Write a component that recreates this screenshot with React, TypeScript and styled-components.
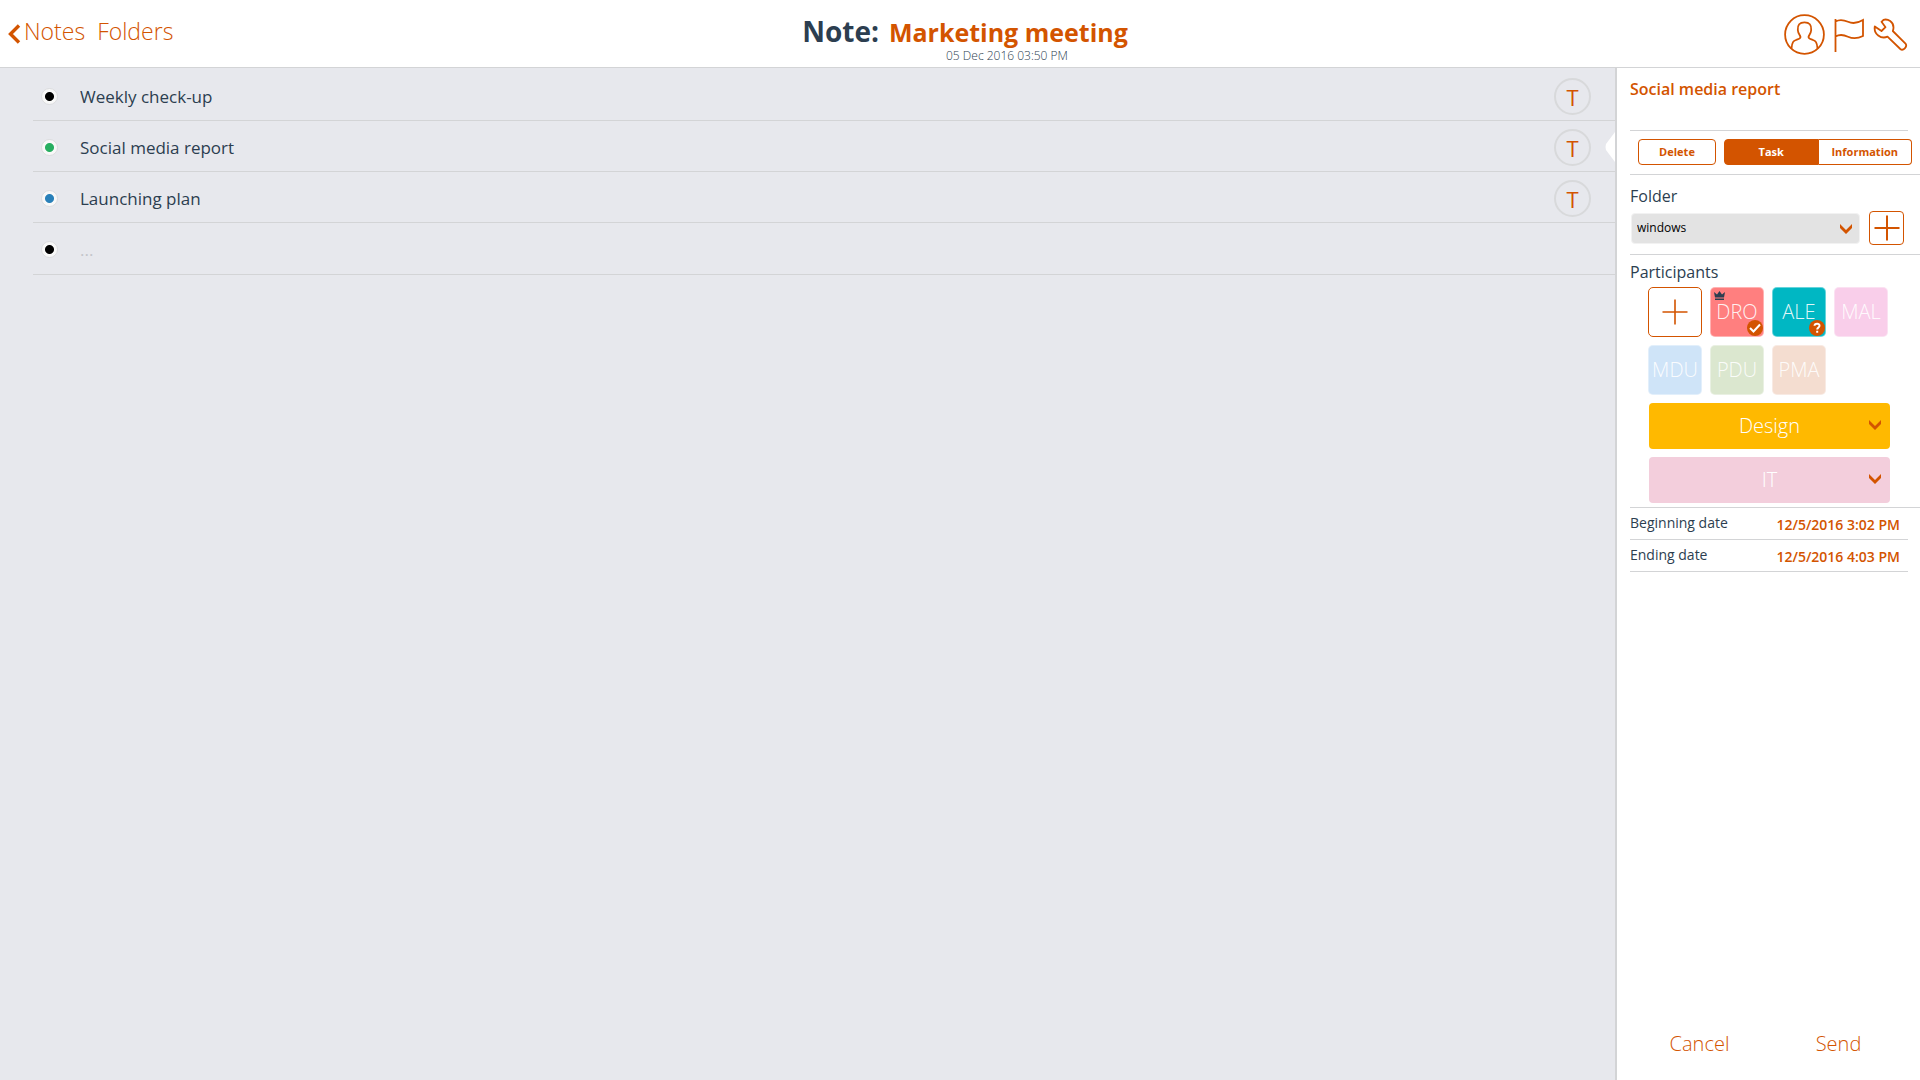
import React, { useState } from "react";
import styled, { createGlobalStyle } from "styled-components";

const accent = "#d35400";
const ink = "#2c3e50";
const rule = "#d3d4d6";

const GlobalStyle = createGlobalStyle`
  *, *::before, *::after { box-sizing: border-box; }
  body { margin: 0; background: #fff; color: ${ink}; font-family: "Open Sans", "Noto Sans", sans-serif; }
  button, input, select { font: inherit; color: inherit; }
  button { padding: 0; border: 0; background: none; cursor: pointer; }
  svg { display: block; }
`;

const Page = styled.div`
  display: flex;
  flex-direction: column;
  min-height: 100vh;
`;

const Header = styled.header`
  display: grid;
  grid-template-columns: 1fr auto 1fr;
  height: 68px;
  padding: 0 12px 0 8px;
  border-bottom: 1px solid ${rule};
`;

const Nav = styled.nav`
  display: flex;
  align-items: center;
  gap: 12px;
  padding-bottom: 6px;
`;

const NavLink = styled.a`
  display: flex;
  align-items: center;
  gap: 3px;
  color: ${accent};
  font-size: 23px;
  font-weight: 300;
  line-height: 32px;
  text-decoration: none;

  svg { margin-top: 6px; }
`;

const Heading = styled.div`
  display: flex;
  flex-direction: column;
  align-items: center;
  padding: 14px 0 0 14px;
`;

const Title = styled.h1`
  display: flex;
  align-items: baseline;
  gap: 10px;
  margin: 0;
  font-size: 28px;
  font-weight: 700;
  line-height: 34px;
`;

const TitleName = styled.span`
  color: ${accent};
  font-size: 25px;
`;

const Stamp = styled.time`
  padding-left: 84px;
  font-size: 12px;
  font-weight: 300;
  line-height: 14px;
  color: ${ink};
`;

const Tools = styled.div`
  display: flex;
  align-items: center;
  justify-content: flex-end;
  gap: 8px;
  padding-top: 2px;
`;

const IconButton = styled.button`
  display: flex;
  color: ${accent};
`;

const Body = styled.div`
  display: flex;
  flex: 1;
`;

const Main = styled.main`
  flex: 1;
  min-width: 0;
  background: #e7e8ed;
`;

const List = styled.ul`
  margin: 0;
  padding: 2px 0 0 33px;
  list-style: none;
`;

const Item = styled.li`
  position: relative;
  display: flex;
  align-items: center;
  height: 51px;
  padding: 2px 24px 0 8px;
  border-bottom: 1px solid ${rule};

  &:last-child { height: 52px; }
`;

const Bullet = styled.button<{ $color: string }>`
  width: 17px;
  height: 17px;
  margin-right: 22px;
  border: 1px solid #dddddf;
  border-radius: 50%;
  background: radial-gradient(circle, ${(p) => p.$color} 0 4px, #f8f8f8 5px);
`;

const ItemText = styled.input`
  flex: 1;
  min-width: 0;
  height: 40px;
  padding: 0;
  border: 0;
  outline: 0;
  background: none;
  font-size: 17px;

  &::placeholder { color: #c3c4c9; opacity: 1; }
`;

const TypeButton = styled.button`
  width: 37px;
  height: 37px;
  border: 2px solid #d8d9db;
  border-radius: 50%;
  color: ${accent};
  font-size: 22px;
  line-height: 34px;
`;

const Pointer = styled.svg`
  position: absolute;
  right: 0;
  top: 11px;
`;

const Side = styled.aside`
  display: flex;
  flex-direction: column;
  width: 305px;
  border-left: 2px solid ${rule};
`;

const Section = styled.section<{ $inset?: boolean }>`
  margin-left: 13px;
  margin-right: ${(p) => (p.$inset ? 12 : 0)}px;
  border-bottom: 1px solid ${rule};
`;

const TaskTitle = styled.h2`
  height: 62px;
  margin: 0;
  padding-top: 9px;
  color: ${accent};
  font-size: 16px;
  font-weight: 600;
  line-height: 24px;
`;

const Actions = styled.div`
  display: flex;
  gap: 8px;
  padding: 8px 8px 9px;
`;

const SmallButton = styled.button<{ $on?: boolean }>`
  height: 26px;
  flex: 1;
  padding-bottom: 2px;
  border: 1px solid ${accent};
  border-radius: 4px;
  background: ${(p) => (p.$on ? accent : "#fff")};
  color: ${(p) => (p.$on ? "#fff" : accent)};
  font-size: 11px;
  font-weight: 700;
`;

const DeleteBox = styled.div`
  display: flex;
  width: 78px;
`;

const Tabs = styled.div`
  display: flex;
  flex: 1;

  ${SmallButton}:first-child { border-radius: 4px 0 0 4px; }
  ${SmallButton}:last-child { border-radius: 0 4px 4px 0; border-left: 0; }
`;

const Label = styled.label`
  display: block;
  font-size: 16px;
  line-height: 24px;
`;

const SubHeading = styled.h3`
  margin: 0;
  padding-top: 5px;
  font-size: 16px;
  font-weight: 400;
  line-height: 24px;
`;

const FolderBox = styled.div`
  padding: 9px 16px 9px 0;
`;

const FolderRow = styled.div`
  display: flex;
  align-items: center;
  gap: 9px;
  padding: 3px 0 0 1px;
`;

const SelectWrap = styled.div`
  position: relative;
  flex: 1;

  svg { position: absolute; right: 8px; top: 11px; pointer-events: none; }
`;

const Select = styled.select`
  display: block;
  width: 100%;
  height: 31px;
  padding: 0 28px 2px 5px;
  border: 1px solid #f2f2f2;
  border-radius: 4px;
  background: #e3e3e3;
  color: #000;
  font-size: 12px;
  appearance: none;
`;

const AddFolder = styled.button`
  display: grid;
  place-items: center;
  width: 35px;
  height: 34px;
  border: 1px solid ${accent};
  border-radius: 4px;
  color: ${accent};
`;

const People = styled.div`
  display: grid;
  grid-template-columns: repeat(4, 54px);
  gap: 8px;
  padding: 3px 0 8px 18px;
`;

const Tile = styled.button<{ $bg: string }>`
  position: relative;
  display: grid;
  place-items: center;
  height: 50px;
  border: 1px solid ${(p) => (p.$bg === "#fff" ? accent : "rgba(255, 255, 255, 0.4)")};
  border-radius: 5px;
  background: ${(p) => p.$bg};
  color: rgba(255, 255, 255, 0.9);
  font-size: 20px;
  font-weight: 300;
  line-height: 24px;
`;

const Crown = styled.svg`
  position: absolute;
  left: 3px;
  top: 3px;
`;

const Badge = styled.svg`
  position: absolute;
  right: 0;
  bottom: 0;
`;

const Groups = styled.div`
  display: flex;
  flex-direction: column;
  gap: 8px;
  padding: 0 30px 4px 19px;
`;

const Group = styled.button<{ $bg: string }>`
  display: grid;
  grid-template-columns: 1fr auto 1fr;
  align-items: center;
  height: 46px;
  padding: 0 9px 2px;
  border-radius: 4px;
  background: ${(p) => p.$bg};
  color: #fff;
  font-size: 20px;
  font-weight: 300;

  span { grid-column: 2; }
  svg { justify-self: end; }
`;

const DateRow = styled.div`
  display: flex;
  justify-content: space-between;
  height: 31px;
  padding-right: 8px;
  font-size: 14px;
  line-height: 30px;
`;

const DateButton = styled.button`
  padding-top: 2px;
  color: ${accent};
  font-weight: 600;
`;

const Footer = styled.footer`
  display: grid;
  grid-template-columns: 1fr 1fr;
  margin-top: auto;
  padding: 0 12px 21px 13px;
`;

const FooterButton = styled.button`
  height: 32px;
  color: ${accent};
  font-size: 20px;
  font-weight: 300;
`;

const Chevron = () => (
  <svg width="12" height="11" viewBox="0 0 12 11" fill={accent} aria-hidden="true">
    <path d="M0 0 L6 6 L12 0 V4 L6 10 L0 4 Z" />
  </svg>
);

const Plus = ({ stroke }: { stroke: number }) => (
  <svg width="26" height="26" viewBox="0 0 26 26" aria-hidden="true">
    <path d="M13 0.5V25.5M0.5 13H25.5" stroke={accent} strokeWidth={stroke} />
  </svg>
);

const notes = [
  { text: "Weekly check-up", color: "#000" },
  { text: "Social media report", color: "#27ae60" },
  { text: "Launching plan", color: "#2980b9" },
  { text: "", color: "#000" },
];

const people = [
  { name: "DRO", bg: "#ff7f7f", owner: true, status: "accepted" },
  { name: "ALE", bg: "#00b7c3", status: "pending" },
  { name: "MAL", bg: "#f9ceea" },
  { name: "MDU", bg: "#cfe4f8" },
  { name: "PDU", bg: "#dbe7cf" },
  { name: "PMA", bg: "#f4ddd0" },
];

const groups = [
  { name: "Design", bg: "#ffb900" },
  { name: "IT", bg: "#f3cedc" },
];

const dates = [
  { name: "Beginning date", value: "12/5/2016 3:02 PM" },
  { name: "Ending date", value: "12/5/2016 4:03 PM" },
];

export default function App() {
  const [tab, setTab] = useState("Task");
  return (
    <Page>
      <GlobalStyle />
      <Header>
        <Nav>
          <NavLink href="#notes">
            <svg width="13" height="20" viewBox="0 0 13 20" fill="none" aria-hidden="true">
              <path d="M11 1.5 L2.5 10 L11 18.5" stroke={accent} strokeWidth="3.4" />
            </svg>
            Notes
          </NavLink>
          <NavLink href="#folders">Folders</NavLink>
        </Nav>
        <Heading>
          <Title>
            Note: <TitleName>Marketing meeting</TitleName>
          </Title>
          <Stamp>05 Dec 2016 03:50 PM</Stamp>
        </Heading>
        <Tools>
          <IconButton aria-label="Account">
            <svg width="41" height="41" viewBox="0 0 41 41" fill="none" stroke={accent} strokeWidth="1.8">
              <circle cx="20.5" cy="20.5" r="19.4" />
              <path d="M7.5 34.5 C8 28 9.500 26.800 12 26 C15 25 16.500 24.700 16.500 23 C16 21 14 19.500 13.800 16 C13.500 11 15.500 8.300 20.500 8.300 C25.500 8.300 27.500 11 27.200 16 C27 19.500 25 21 24.500 23 C24.500 24.700 26 25 29 26 C31.500 26.800 33 28 33.500 34.500" />
            </svg>
          </IconButton>
          <IconButton aria-label="Flag">
            <svg width="32" height="34" viewBox="0 0 32 34" fill="none" stroke={accent} strokeWidth="1.8">
              <path d="M2.500 1V34M2.500 3.500C6 1.500 10 1.500 15 3.800S25 5 30 2V18C25 20.500 20 21 15 18.700S6 16.500 2.500 18.500" />
            </svg>
          </IconButton>
          <IconButton aria-label="Settings">
            <svg width="35" height="34" viewBox="0 0 35 34" fill="none" stroke={accent} strokeWidth="1.8" strokeLinejoin="round">
              <path d="M10.500 1.800C15 0.500 20.500 4 20.500 9.500C20.500 11 20.200 12 19.800 13L32.500 25.700C34 27.500 33 29 31.800 30.300C30.500 31.700 29 32.500 27.300 31L14.500 18.700C8 21.500 0.500 16 1.800 8.500L8.500 13L12.500 9.200L8.500 3.800Z" />
            </svg>
          </IconButton>
        </Tools>
      </Header>
      <Body>
        <Main>
          <List>
            {notes.map((n, i) => (
              <Item key={i}>
                <Bullet $color={n.color} aria-label="Change colour" />
                <ItemText aria-label="Note line" defaultValue={n.text} placeholder="..." />
                {n.text && <TypeButton>T</TypeButton>}
                {i === 1 && (
                  <Pointer width="10" height="30" viewBox="0 0 10 30" fill="#fff" aria-hidden="true">
                    <path d="M10 0 L1 12 Q0 15 1 18 L10 30Z" />
                  </Pointer>
                )}
              </Item>
            ))}
          </List>
        </Main>
        <Side>
          <Section $inset>
            <TaskTitle>Social media report</TaskTitle>
          </Section>
          <Section>
            <Actions>
              <DeleteBox>
                <SmallButton>Delete</SmallButton>
              </DeleteBox>
              <Tabs role="tablist">
                {["Task", "Information"].map((t) => (
                  <SmallButton key={t} role="tab" aria-selected={tab === t} $on={tab === t} onClick={() => setTab(t)}>
                    {t}
                  </SmallButton>
                ))}
              </Tabs>
            </Actions>
          </Section>
          <Section>
            <FolderBox>
              <Label htmlFor="folder">Folder</Label>
              <FolderRow>
                <SelectWrap>
                  <Select id="folder" defaultValue="windows">
                    <option>windows</option>
                  </Select>
                  <Chevron />
                </SelectWrap>
                <AddFolder aria-label="Add folder">
                  <Plus stroke={2} />
                </AddFolder>
              </FolderRow>
            </FolderBox>
          </Section>
          <Section>
            <SubHeading>Participants</SubHeading>
            <People>
              <Tile $bg="#fff" aria-label="Add participant">
                <Plus stroke={1.6} />
              </Tile>
              {people.map((p) => (
                <Tile key={p.name} $bg={p.bg}>
                  {p.name}
                  {p.owner && (
                    <Crown width="11" height="9" viewBox="0 0 11 9" fill={ink} aria-hidden="true">
                      <path d="M0 1 L3 3.500 L5.500 0 L8 3.500 L11 1 L10 6.500 H1ZM1 7.500H10V9H1Z" />
                    </Crown>
                  )}
                  {p.status && (
                    <Badge width="16" height="16" viewBox="0 0 16 16" fill="none" stroke="#fff" strokeWidth="2" aria-hidden="true">
                      <circle cx="8" cy="8" r="8" fill={accent} stroke="none" />
                      {p.status === "accepted" ? (
                        <path d="M3 8 L6.500 11.500 L13 4.500" />
                      ) : (
                        <path d="M5.500 5.800C5.700 3 10.800 3 10.500 6C10.300 7.600 8.200 7.500 8.200 9.600M8.200 10.800V12.800" />
                      )}
                    </Badge>
                  )}
                </Tile>
              ))}
            </People>
            <Groups>
              {groups.map((g) => (
                <Group key={g.name} $bg={g.bg} aria-expanded={false}>
                  <span>{g.name}</span>
                  <Chevron />
                </Group>
              ))}
            </Groups>
          </Section>
          {dates.map((d) => (
            <Section $inset key={d.name}>
              <DateRow>
                <span>{d.name}</span>
                <DateButton aria-label={d.name}>{d.value}</DateButton>
              </DateRow>
            </Section>
          ))}
          <Footer>
            <FooterButton>Cancel</FooterButton>
            <FooterButton>Send</FooterButton>
          </Footer>
        </Side>
      </Body>
    </Page>
  );
}
